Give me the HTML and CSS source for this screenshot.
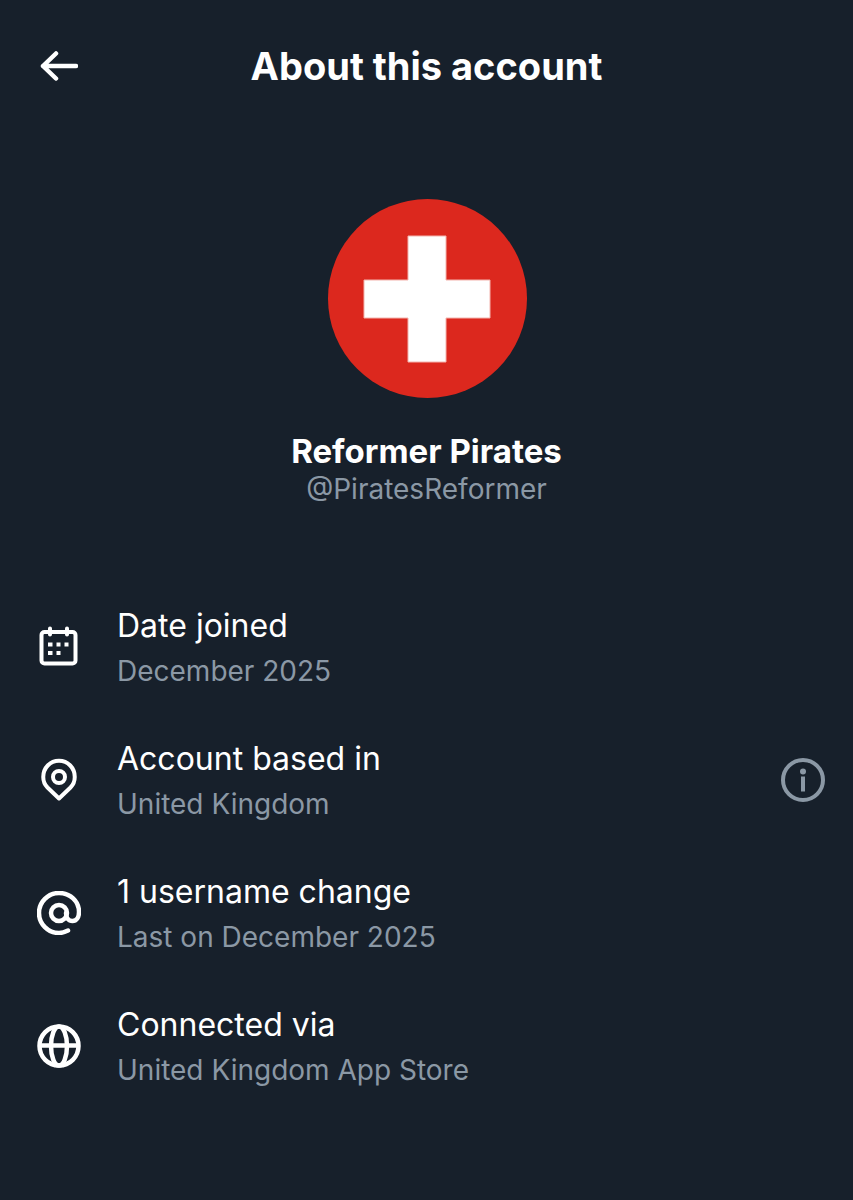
FILE: index.html
```html
<!DOCTYPE html>
<html lang="en">
<head>
    <meta charset="UTF-8">
    <meta name="viewport" content="width=device-width, initial-scale=1.0">
    <title>About this account</title>
    <link rel="stylesheet" href="styles.css">
</head>
<body>
    <div class="page">
        <header class="top-bar">
            <svg class="back-icon" viewBox="0 0 38 30" fill="none" stroke="#fff" stroke-width="4.500" stroke-linecap="round" stroke-linejoin="round">
                <path d="M36 15H3M16 2.500 3 15l13 12.500"/>
            </svg>
            <h1>About this account</h1>
        </header>

        <div class="profile">
            <svg class="avatar" viewBox="0 0 199 199">
                <circle cx="99.500" cy="99.500" r="99.500" fill="#dc281e"/>
                <path d="M80 37h38v44h44v38h-44v44H80v-44H36V81h44z" fill="#fff" stroke="#f3b4ae" stroke-width="1"/>
            </svg>
            <div class="name">Reformer Pirates</div>
            <div class="handle">@PiratesReformer</div>
        </div>

        <div class="rows">
            <div class="row">
                <svg class="row-icon" viewBox="0 0 44 44" fill="none" stroke="#fff" stroke-width="4">
                    <rect x="4.500" y="7" width="34" height="31.500" rx="3"/>
                    <path d="M13 3.500v6M30 3.500v6" stroke-linecap="round"/>
                    <path d="M11 17.500h4.500v4H11zM19.500 17.500h4v4h-4zM27.500 17.500h4v4h-4zM11 26h4.500v4H11zM19.500 26h4v4h-4z" fill="#fff" stroke="none"/>
                </svg>
                <div class="row-text">
                    <div class="row-label">Date joined</div>
                    <div class="row-sub">December 2025</div>
                </div>
            </div>
            <div class="row">
                <svg class="row-icon" viewBox="0 0 44 44" fill="none" stroke="#fff" stroke-width="4">
                    <path d="M22 40.500 10.500 29.500C7.500 26.500 6.250 23 6.250 19 6.250 10 13 2.750 22 2.750S37.750 10 37.750 19c0 4-1.250 7.500-4.250 10.500z" stroke-linejoin="round"/>
                    <circle cx="22" cy="19" r="6"/>
                </svg>
                <div class="row-text">
                    <div class="row-label">Account based in</div>
                    <div class="row-sub">United Kingdom</div>
                </div>
                <svg class="info-icon" viewBox="0 0 44 44" fill="none" stroke="#8b98a5" stroke-width="4">
                    <circle cx="22" cy="22" r="20"/>
                    <circle cx="22" cy="13.500" r="3" fill="#8b98a5" stroke="none"/>
                    <path d="M22 20.500v11" stroke-linecap="square"/>
                </svg>
            </div>
            <div class="row">
                <svg class="row-icon" viewBox="0 0 44 44" fill="none" stroke="#fff" stroke-width="4.500" stroke-linecap="round">
                    <path d="M31 39.500C28 41 25 42 22 42 11 42 2 33 2 22S11 2 22 2s20 8 20 19c0 5-2.500 9-6.500 9S29 27 29 22"/>
                    <circle cx="22" cy="22" r="8"/>
                </svg>
                <div class="row-text">
                    <div class="row-label">1 username change</div>
                    <div class="row-sub">Last on December 2025</div>
                </div>
            </div>
            <div class="row">
                <svg class="row-icon" viewBox="0 0 44 44" fill="none" stroke="#fff" stroke-width="4.500">
                    <circle cx="22" cy="22" r="19.500"/>
                    <ellipse cx="22" cy="22" rx="8" ry="19.500"/>
                    <path d="M3 21.500h38"/>
                </svg>
                <div class="row-text">
                    <div class="row-label">Connected via</div>
                    <div class="row-sub">United Kingdom App Store</div>
                </div>
            </div>
        </div>
    </div>
</body>
</html>
```

FILE: styles.css
```css
html, body {
    margin: 0;
    padding: 0;
}

body {
    background-color: #17202b;
    color: #fff;
    font-family: Inter, "Liberation Sans", sans-serif;
}

.page {
    height: 1200px;
    overflow: hidden;
}

.top-bar {
    position: relative;
    height: 132px;
    display: flex;
    align-items: center;
    justify-content: center;
}

.top-bar h1 {
    margin: 0;
    font-size: 38px;
    font-weight: 700;
    line-height: 44px;
}

.back-icon {
    position: absolute;
    left: 40px;
    top: 51px;
    width: 38px;
    height: 30px;
}

.profile {
    display: flex;
    flex-direction: column;
    align-items: center;
    padding-top: 67px;
}

.avatar {
    display: block;
    width: 199px;
    height: 199px;
    margin-left: 1px;
}

.name {
    margin-top: 34px;
    font-size: 33px;
    font-weight: 700;
    line-height: 38px;
}

.handle {
    margin-top: 1px;
    font-size: 28px;
    line-height: 36px;
    color: #8b98a5;
}

.rows {
    margin-top: 97px;
    display: flex;
    flex-direction: column;
    gap: 43px;
}

.row {
    display: flex;
    align-items: center;
    padding: 0 28px 0 37px;
    height: 90px;
}

.row-icon {
    width: 44px;
    height: 44px;
    flex-shrink: 0;
    margin-bottom: 4px;
}

.row-text {
    margin-left: 36px;
    flex: 1;
}

.row-label {
    font-size: 32px;
    line-height: 44px;
}

.row-sub {
    font-size: 28px;
    line-height: 46px;
    color: #8b98a5;
}

.info-icon {
    width: 44px;
    height: 44px;
    flex-shrink: 0;
    margin-bottom: 4px;
}
```
